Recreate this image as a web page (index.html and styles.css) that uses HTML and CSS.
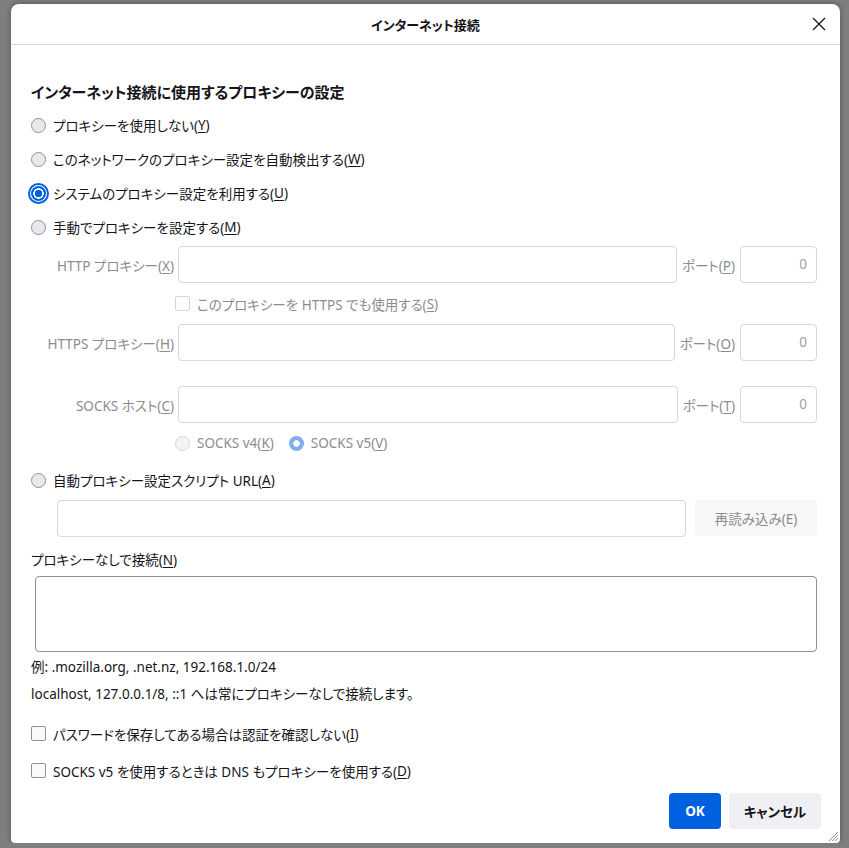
FILE: index.html
```html
<!DOCTYPE html>
<html lang="ja">
<head>
  <meta charset="UTF-8" />
  <title>インターネット接続</title>
  <link rel="stylesheet" href="styles.css">
</head>
<body>
  <div class="dialog">
    <div class="titlebar">
      <span></span>
      <span class="title">インターネット接続</span>
      <span class="close">
        <svg width="14" height="14" viewBox="0 0 14 14"><path d="M1 1 L13 13 M13 1 L1 13" stroke="#15141a" stroke-width="1.3" fill="none"/></svg>
      </span>
    </div>

    <div class="content">
      <h1>インターネット接続に使用するプロキシーの設定</h1>

      <label class="row"><span class="radio"></span>プロキシーを使用しない(<u>Y</u>)</label>
      <label class="row"><span class="radio"></span>このネットワークのプロキシー設定を自動検出する(<u>W</u>)</label>
      <label class="row"><span class="radio checked"></span>システムのプロキシー設定を利用する(<u>U</u>)</label>
      <label class="row"><span class="radio"></span>手動でプロキシーを設定する(<u>M</u>)</label>

      <div class="manual">
        <div class="proxy-row first">
          <span class="proxy-label"><span>HTTP プロキシー(<u>X</u>)</span></span>
          <span class="field"></span>
          <span class="port-label">ポート(<u>P</u>)</span>
          <span class="field port">0</span>
        </div>
        <div class="sub-row share">
          <span class="check disabled"></span>このプロキシーを HTTPS でも使用する(<u>S</u>)
        </div>
        <div class="proxy-row">
          <span class="proxy-label"><span>HTTPS プロキシー(<u>H</u>)</span></span>
          <span class="field"></span>
          <span class="port-label">ポート(<u>O</u>)</span>
          <span class="field port">0</span>
        </div>
        <div class="proxy-row socks">
          <span class="proxy-label"><span>SOCKS ホスト(<u>C</u>)</span></span>
          <span class="field"></span>
          <span class="port-label">ポート(<u>T</u>)</span>
          <span class="field port">0</span>
        </div>
        <div class="sub-row versions">
          <span class="radio disabled"></span><span class="ver">SOCKS v4(<u>K</u>)</span>
          <span class="radio disabled-checked"></span><span>SOCKS v5(<u>V</u>)</span>
        </div>
      </div>

      <label class="row"><span class="radio"></span>自動プロキシー設定スクリプト URL(<u>A</u>)</label>
      <div class="url-row">
        <span class="field"></span>
        <span class="reload">再読み込み(E)</span>
      </div>

      <div class="noproxy-label">プロキシーなしで接続(<u>N</u>)</div>
      <div class="textarea"></div>
      <div class="hint first">例: .mozilla.org, .net.nz, 192.168.1.0/24</div>
      <div class="hint">localhost, 127.0.0.1/8, ::1 へは常にプロキシーなしで接続します。</div>

      <label class="row check-row first"><span class="check"></span>パスワードを保存してある場合は認証を確認しない(<u>I</u>)</label>
      <label class="row check-row"><span class="check"></span>SOCKS v5 を使用するときは DNS もプロキシーを使用する(<u>D</u>)</label>
    </div>

    <div class="buttons">
      <button class="btn primary">OK</button>
      <button class="btn">キャンセル</button>
    </div>

    <svg class="grip" width="12" height="12" viewBox="0 0 12 12">
      <path d="M11 2 L2 11 M11 5 L5 11 M11 8 L8 11" stroke="#8f8f9d" stroke-width="1" fill="none"/>
    </svg>
  </div>
</body>
</html>
```

FILE: styles.css
```css
* {
  box-sizing: border-box;
  margin: 0;
  padding: 0;
}

body {
  background: #7f7f7f;
  font-family: "Noto Sans", "Noto Sans CJK JP", sans-serif;
  font-size: 13.5px;
  font-feature-settings: "palt";
  color: #15141a;
}

.dialog {
  position: relative;
  margin: 4px 0 0 11px;
  width: 829px;
  height: 839px;
  background: #fff;
  border-radius: 8px 8px 4px 4px;
  box-shadow: 0 0 6px rgba(0, 0, 0, 0.35);
  display: flex;
  flex-direction: column;
}

.titlebar {
  height: 41px;
  border-bottom: 1px solid #d7d7db;
  display: grid;
  grid-template-columns: 1fr auto 1fr;
  align-items: center;
}

.title {
  font-weight: bold;
  font-size: 13px;
}

.close {
  justify-self: end;
  margin-right: 14px;
  display: flex;
}

.content {
  padding: 36px 23px 0 20px;
  flex: 1;
}

h1 {
  font-size: 15px;
  font-weight: bold;
  line-height: 22px;
  margin-bottom: 5px;
}

u {
  text-decoration-thickness: 1px;
  text-underline-offset: 2px;
}

.row {
  display: flex;
  align-items: center;
  height: 34px;
}

.radio {
  width: 15px;
  height: 15px;
  border-radius: 50%;
  border: 1px solid #8f8f9d;
  background: #e9e9ed;
  margin: 0 7px 0 0;
  flex-shrink: 0;
}

.radio.checked {
  border: none;
  background: radial-gradient(circle, #0061e0 0 3.5px, #fff 4px 5px, #0061e0 5.5px);
  outline: 2px solid #0061e0;
  outline-offset: 1px;
}

.radio.disabled {
  border-color: #d5d5da;
  background: #f4f4f6;
}

.radio.disabled-checked {
  border: none;
  background: radial-gradient(circle, #fff 0 3px, #80aef0 3.5px);
}

.check {
  width: 15px;
  height: 15px;
  border: 1px solid #8f8f9d;
  border-radius: 2px;
  background: #f9f9fb;
  margin-right: 7px;
  flex-shrink: 0;
}

.check.disabled {
  border-color: #d5d5da;
  background: #fcfcfc;
}

.manual {
  color: #8c8c8f;
  padding-left: 26px;
}

.proxy-row {
  display: flex;
  align-items: center;
  height: 37px;
}

.proxy-row.first {
  margin-top: 2px;
}

.proxy-row.socks {
  margin-top: 25px;
}

.proxy-label {
  flex: 0 0 117px;
  min-width: 0;
  display: flex;
  justify-content: flex-end;
  margin-right: 4px;
  white-space: nowrap;
}

.proxy-label span {
  flex-shrink: 0;
}

.field {
  flex: 1;
  height: 37px;
  border: 1px solid #d7d7db;
  border-radius: 4px;
  background: #fff;
}

.port-label {
  margin: 0 5px;
}

.field.port {
  flex: 0 0 77px;
  text-align: right;
  padding-right: 9px;
  line-height: 35px;
  color: #a0a0a4;
}

.sub-row {
  display: flex;
  align-items: center;
  padding-left: 118px;
}

.share {
  height: 41px;
}

.versions {
  height: 40px;
}

.ver {
  margin-right: 15px;
}

.url-row {
  display: flex;
  gap: 9px;
  padding-left: 26px;
  margin-top: 3px;
}

.reload {
  width: 122px;
  height: 36px;
  border-radius: 4px;
  background: #f7f7f8;
  color: #8c8c8f;
  display: flex;
  align-items: center;
  justify-content: center;
}

.noproxy-label {
  margin-top: 12px;
  line-height: 22px;
}

.textarea {
  margin: 5px 0 0 4px;
  height: 76px;
  border: 1px solid #8f8f9d;
  border-radius: 4px;
}

.hint {
  line-height: 22px;
  margin-top: 5px;
}

.hint.first {
  margin-top: 4px;
}

.check-row {
  height: 37px;
}

.check-row.first {
  margin-top: 10px;
}

.buttons {
  display: flex;
  justify-content: flex-end;
  gap: 8px;
  padding: 0 19px 14px 0;
}

.btn {
  width: 92px;
  height: 36px;
  border: none;
  border-radius: 4px;
  background: #f0f0f4;
  color: #15141a;
  font-family: inherit;
  font-size: 13.5px;
  font-weight: bold;
  font-feature-settings: "palt";
}

.btn.primary {
  width: 52px;
  background: #0061e0;
  color: #fff;
}

.grip {
  position: absolute;
  right: 1px;
  bottom: 1px;
}
```
